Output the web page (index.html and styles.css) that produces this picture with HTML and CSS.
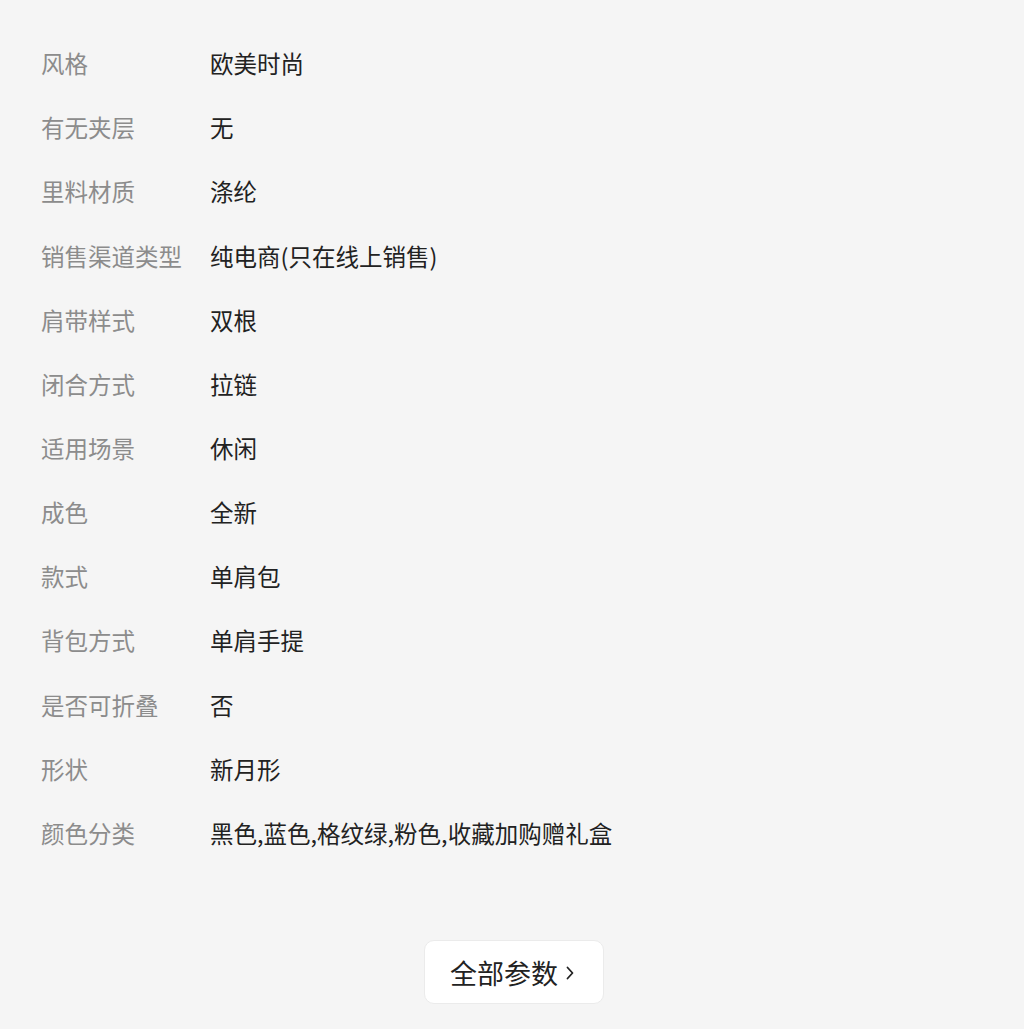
FILE: index.html
```html
<!DOCTYPE html>
<html lang="zh-CN">
<head>
    <meta charset="UTF-8">
    <meta name="viewport" content="width=device-width, initial-scale=1.0">
    <title>商品参数</title>
    <link rel="stylesheet" href="styles.css">
</head>
<body>
    <div class="params">
        <div class="row"><span class="label">风格</span><span class="value">欧美时尚</span></div>
        <div class="row"><span class="label">有无夹层</span><span class="value">无</span></div>
        <div class="row"><span class="label">里料材质</span><span class="value">涤纶</span></div>
        <div class="row"><span class="label">销售渠道类型</span><span class="value">纯电商(只在线上销售)</span></div>
        <div class="row"><span class="label">肩带样式</span><span class="value">双根</span></div>
        <div class="row"><span class="label">闭合方式</span><span class="value">拉链</span></div>
        <div class="row"><span class="label">适用场景</span><span class="value">休闲</span></div>
        <div class="row"><span class="label">成色</span><span class="value">全新</span></div>
        <div class="row"><span class="label">款式</span><span class="value">单肩包</span></div>
        <div class="row"><span class="label">背包方式</span><span class="value">单肩手提</span></div>
        <div class="row"><span class="label">是否可折叠</span><span class="value">否</span></div>
        <div class="row"><span class="label">形状</span><span class="value">新月形</span></div>
        <div class="row"><span class="label">颜色分类</span><span class="value">黑色,蓝色,格纹绿,粉色,收藏加购赠礼盒</span></div>
    </div>

    <div class="footer">
        <a href="#" class="btn">全部参数
            <svg class="arrow" width="8" height="14" viewBox="0 0 8 14"><path d="M1.5 1.5 L6.5 7 L1.5 12.5" fill="none" stroke="#222" stroke-width="1.8" stroke-linecap="round" stroke-linejoin="round"/></svg>
        </a>
    </div>
</body>
</html>
```

FILE: styles.css
```css
body {
    margin: 0;
    padding: 31px 0 0 41px;
    background-color: #f5f5f5;
    font-family: "Microsoft YaHei", "Noto Sans CJK SC", sans-serif;
}
.params {
    display: flex;
    flex-direction: column;
}
.row {
    display: flex;
    align-items: center;
    height: 64.17px;
    font-size: 23.5px;
}
.label {
    width: 169px;
    flex-shrink: 0;
    color: #8c8c8c;
}
.value {
    color: #222;
}
.footer {
    display: flex;
    justify-content: center;
    padding: 75px 37px 0 0;
}
.btn {
    display: flex;
    align-items: center;
    justify-content: center;
    gap: 8px;
    box-sizing: border-box;
    width: 180px;
    height: 64px;
    padding-right: 4px;
    background-color: white;
    border: 1px solid #ebebeb;
    border-radius: 10px;
    color: #222;
    font-size: 27px;
    line-height: 1;
    text-decoration: none;
}
.arrow {
    margin-top: 2px;
}
```
